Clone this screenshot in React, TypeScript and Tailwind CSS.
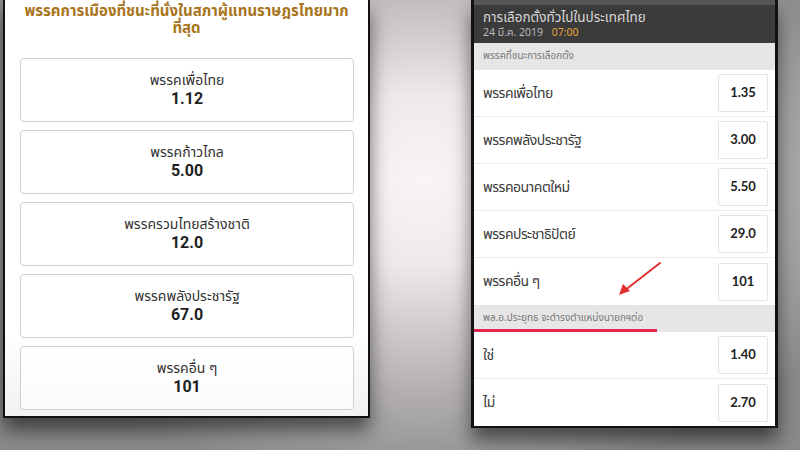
const THAI = "font-['Noto_Sans_Thai','Noto_Sans','DejaVu_Sans',sans-serif]";

const leftCards = [
  { name: "พรรคเพื่อไทย", odds: "1.12" },
  { name: "พรรคก้าวไกล", odds: "5.00" },
  { name: "พรรครวมไทยสร้างชาติ", odds: "12.0" },
  { name: "พรรคพลังประชารัฐ", odds: "67.0" },
  { name: "พรรคอื่น ๆ", odds: "101" },
];

const winners = [
  { name: "พรรคเพื่อไทย", odds: "1.35" },
  { name: "พรรคพลังประชารัฐ", odds: "3.00" },
  { name: "พรรคอนาคตใหม่", odds: "5.50" },
  { name: "พรรคประชาธิปัตย์", odds: "29.0" },
  { name: "พรรคอื่น ๆ", odds: "101" },
];

const pmRows = [
  { name: "ใช่", odds: "1.40" },
  { name: "ไม่", odds: "2.70" },
];

function OddsRow({ name, odds, last }: { name: string; odds: string; last?: boolean }) {
  return (
    <div
      className={`flex h-[47px] items-center justify-between bg-white pl-[9px] pr-[7px] ${
        last ? "" : "border-b border-[#ececec]"
      }`}
    >
      <span className="text-[14px] tracking-[-0.5px] text-[#3a3a3a]">{name}</span>
      <div className="flex h-[38px] w-[50px] items-center justify-center rounded-[2px] border border-[#e3e3e3] bg-white font-['Lato',sans-serif] text-[13px] font-bold text-[#222]">
        {odds}
      </div>
    </div>
  );
}

function SectionBar({ label, children }: { label: string; children?: React.ReactNode }) {
  return (
    <div className="relative flex h-[27px] items-center bg-[#e6e6e6] pl-[9px] text-[10px] text-[#777]">
      {label}
      {children}
    </div>
  );
}

export default function App() {
  return (
    <div
      className={`relative flex h-[450px] w-[800px] items-start overflow-hidden bg-[radial-gradient(ellipse_at_53%_40%,#faf5f5_0%,#efe9e9_22%,#b4b0b0_55%,#8a8a8a_80%)] ${THAI}`}
    >
      {/* left phone */}
      <div className="ml-[3px] h-[418px] w-[367px] border-x-2 border-b-2 border-[#111] bg-white shadow-[0_12px_18px_rgba(0,0,0,0.55)]">
        <div className="flex h-full flex-col bg-gradient-to-b from-white from-80% to-[#f1f1f1]">
          <h1 className="whitespace-nowrap pt-[3px] text-center text-[15px] font-bold leading-[17px] text-[#a8741c]">
            พรรคการเมืองที่ชนะที่นั่งในสภาผู้แทนราษฎรไทยมาก
            <br />
            ที่สุด
          </h1>
          <div className="mt-[21px] flex flex-col gap-[8px] pl-[15px] pr-[14px]">
            {leftCards.map((c) => (
              <div
                key={c.name}
                className="flex h-[64px] flex-col items-center justify-center rounded-[4px] border border-[#cfcfcf] bg-white/70"
              >
                <span className="text-[14px] leading-[18px] text-[#333]">{c.name}</span>
                <span className="font-['Roboto',sans-serif] text-[16px] font-bold leading-[18px] text-[#1e1e1e]">
                  {c.odds}
                </span>
              </div>
            ))}
          </div>
        </div>
      </div>

      {/* right phone */}
      <div className="relative ml-[101px] h-[428px] w-[307px] border-x-[3px] border-b-[3px] border-[#111] bg-white shadow-[0_12px_18px_rgba(0,0,0,0.55)]">
        <div className="h-[5px] bg-[#555]" />
        <div className="h-[38px] bg-[#3b3b3b] pl-[9px] pt-[4px]">
          <div className="text-[13.5px] leading-[18px] text-[#d8d8d8]">การเลือกตั้งทั่วไปในประเทศไทย</div>
          <div className="text-[10.5px] leading-[12px] text-[#b9b9b9]">
            24 มี.ค. 2019 <span className="ml-[6px] text-[#e6a23a]">07:00</span>
          </div>
        </div>
        <SectionBar label="พรรคที่ชนะการเลือกตั้ง" />
        {winners.map((r, i) => (
          <OddsRow key={r.name} name={r.name} odds={r.odds} last={i === winners.length - 1} />
        ))}
        <SectionBar label="พล.อ.ประยุทธ จะดำรงตำแหน่งนายกฯต่อ">
          <div className="absolute bottom-0 left-0 h-[3px] w-[183px] bg-[#e2264c]" />
        </SectionBar>
        {pmRows.map((r, i) => (
          <OddsRow key={r.name} name={r.name} odds={r.odds} last={i === pmRows.length - 1} />
        ))}

        {/* annotation arrow */}
        <svg
          className="absolute left-[141px] top-[258px]"
          width="50"
          height="42"
          viewBox="0 0 50 42"
        >
          <line x1="45" y1="5" x2="9" y2="33" stroke="#e0302e" strokeWidth="2" strokeLinecap="round" />
          <path d="M4 37 L8 26 L15 33 Z" fill="#e0302e" />
        </svg>
      </div>
    </div>
  );
}
